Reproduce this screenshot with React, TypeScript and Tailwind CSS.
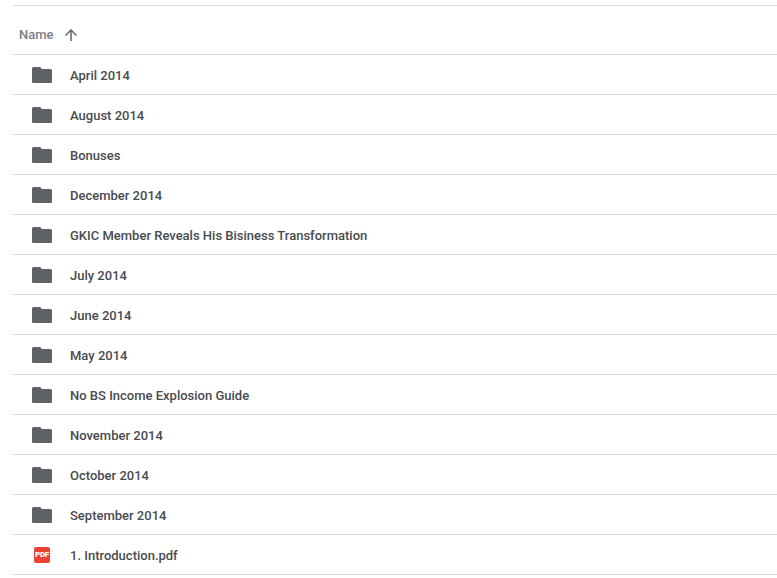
import type { ReactNode } from "react";

const folders = [
  "April 2014",
  "August 2014",
  "Bonuses",
  "December 2014",
  "GKIC Member Reveals His Bisiness Transformation",
  "July 2014",
  "June 2014",
  "May 2014",
  "No BS Income Explosion Guide",
  "November 2014",
  "October 2014",
  "September 2014",
];

function FolderIcon() {
  return (
    <svg width="20" height="16" viewBox="0 0 20 16" fill="#5f6368">
      <path d="M8 0H1.6C.7 0 0 .7 0 1.6v12.8C0 15.3.7 16 1.6 16h16.8c.9 0 1.6-.7 1.6-1.6V3.6c0-.9-.7-1.6-1.6-1.6H10L8 0z" />
    </svg>
  );
}

function ArrowUpIcon() {
  return (
    <svg className="ml-[8px]" width="18" height="18" viewBox="0 0 24 24" fill="#5f6368">
      <path d="M4 12l1.41 1.41L11 7.83V20h2V7.83l5.58 5.59L20 12l-8-8-8 8z" />
    </svg>
  );
}

function PdfIcon() {
  return (
    <div className="flex h-4 w-4 items-center justify-center rounded-[2px] bg-[#ea4335]">
      <span className="text-[8px] leading-none font-black tracking-[-0.3px] text-white">PDF</span>
    </div>
  );
}

function Row({ name, icon }: { name: string; icon: ReactNode }) {
  return (
    <div className="flex h-10 items-center border-b border-[#dadce0]">
      <div className="flex w-[58px] shrink-0 items-center justify-center">{icon}</div>
      <span className="-ml-px pt-[2px] text-[13px] font-medium text-[#484b4f]">{name}</span>
    </div>
  );
}

export default function App() {
  return (
    <div className="h-[578px] w-[777px] overflow-hidden bg-white pl-[13px] pt-[5px] font-['Roboto',sans-serif]">
      <div className="flex h-[50px] items-center border-y border-[#dadce0] pl-[6px] pt-[9px]">
        <span className="text-[13px] font-medium text-[#7a7d82]">Name</span>
        <ArrowUpIcon />
      </div>
      {folders.map((name) => (
        <Row key={name} name={name} icon={<FolderIcon />} />
      ))}
      <Row name="1. Introduction.pdf" icon={<PdfIcon />} />
    </div>
  );
}
